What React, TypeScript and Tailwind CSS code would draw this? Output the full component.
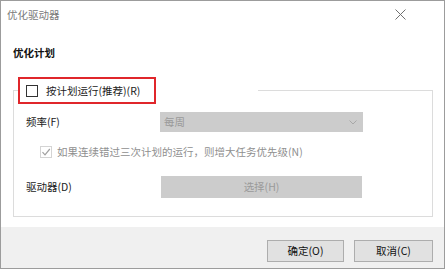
import React from "react";

const font = { fontFamily: '"Noto Sans CJK SC", "Noto Sans", sans-serif' };

const CloseIcon = () => (
  <svg width="11" height="11" viewBox="0 0 11 11" className="block">
    <path d="M0.5 0.5 L10.5 10.5 M10.5 0.5 L0.5 10.5" stroke="#707070" strokeWidth="1" />
  </svg>
);

const Chevron = () => (
  <svg width="8" height="5" viewBox="0 0 8 5" className="block">
    <path d="M0.5 0.5 L4 4 L7.5 0.5" stroke="#a8a8a8" strokeWidth="1" fill="none" />
  </svg>
);

const CheckMark = () => (
  <svg width="10" height="10" viewBox="0 0 10 10" className="block">
    <path d="M1.5 5.2 L4 7.8 L8.8 2" stroke="#a0a0a0" strokeWidth="1.2" fill="none" />
  </svg>
);

const App = () => {
  return (
    <div
      style={font}
      className="w-[445px] h-[269px] border border-[#9c9c9c] bg-white flex flex-col text-[10.5px] text-[#222]"
    >
      {/* title bar */}
      <div className="h-[27px] flex items-center justify-between pl-[6px] pr-[38px]">
        <span className="text-[#7a7a7a] leading-[14px]">优化驱动器</span>
        <CloseIcon />
      </div>

      <div className="flex-1 px-[12px] pt-[17px]">
        <div className="font-bold leading-[16px] text-[#111]">优化计划</div>

        <fieldset className="mt-[16px] w-[420px] border border-[#dcdcdc] px-0 pb-[18px]">
          <legend className="ml-[4px] w-[240px] p-0">
            <div className="w-[138px] h-[27px] border-2 border-[#e0262b] flex items-center pl-[6px]">
              <div className="w-[12px] h-[12px] border border-[#333] bg-white" />
              <span className="ml-[8px] leading-[14px]">按计划运行(推荐)(R)</span>
            </div>
          </legend>

          <div className="mt-[8px] flex items-center pl-[12px]">
            <span className="w-[134px] leading-[14px]">频率(F)</span>
            <div className="w-[203px] h-[20px] bg-[#cccccc] flex items-center justify-between pl-[4px] pr-[6px]">
              <span className="text-[#9a9a9a] leading-[14px]">每周</span>
              <Chevron />
            </div>
          </div>

          <div className="mt-[12px] h-[16px] flex items-center pl-[26px]">
            <div className="w-[12px] h-[12px] border border-[#d4d4d4] flex items-center justify-center">
              <CheckMark />
            </div>
            <span className="ml-[5px] text-[#8f8f8f] leading-[14px]">
              如果连续错过三次计划的运行，则增大任务优先级(N)
            </span>
          </div>

          <div className="mt-[16px] flex items-center pl-[12px]">
            <span className="w-[135px] leading-[14px]">驱动器(D)</span>
            <div className="w-[201px] h-[22px] bg-[#cccccc] flex items-center justify-center text-[#9a9a9a] leading-[14px]">
              选择(H)
            </div>
          </div>
        </fieldset>
      </div>

      {/* footer */}
      <div className="h-[41px] bg-[#f0f0f0] flex justify-end gap-[10px] pt-[13px] pr-[11px]">
        <button className="w-[77px] h-[22px] bg-[#e1e1e1] border border-[#adadad] leading-[14px] text-[#111]">
          确定(O)
        </button>
        <button className="w-[79px] h-[22px] bg-[#e1e1e1] border border-[#adadad] leading-[14px] text-[#111]">
          取消(C)
        </button>
      </div>
    </div>
  );
};

export default App;
